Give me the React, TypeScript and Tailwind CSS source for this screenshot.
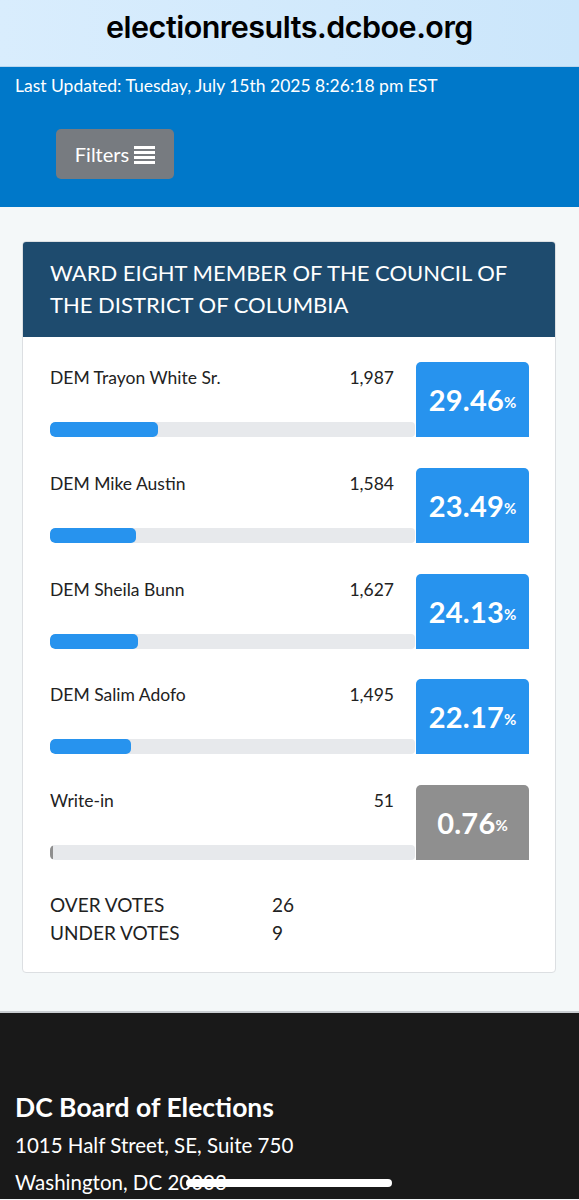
import React from "react";

const rows = [
  { name: "DEM Trayon White Sr.", votes: "1,987", pct: 29.46, color: "blue" },
  { name: "DEM Mike Austin", votes: "1,584", pct: 23.49, color: "blue" },
  { name: "DEM Sheila Bunn", votes: "1,627", pct: 24.13, color: "blue" },
  { name: "DEM Salim Adofo", votes: "1,495", pct: 22.17, color: "blue" },
  { name: "Write-in", votes: "51", pct: 0.76, color: "gray" },
];

function Row({ r }: { r: (typeof rows)[number] }) {
  const blue = r.color === "blue";
  return (
    <div className="flex h-[75px]">
      <div className="flex flex-1 flex-col justify-between pt-[4px]">
        <div className="flex justify-between pr-[21px] text-[17.5px] leading-[24px] text-[#222]">
          <span>{r.name}</span>
          <span>{r.votes}</span>
        </div>
        <div className="h-[15px] w-full overflow-hidden rounded-l-[5px] rounded-r-[4px] bg-[#e7e9ec]">
          <div
            className={blue ? "h-full rounded-[5px] bg-[#2793ee]" : "h-full rounded-[5px] bg-[#8e8e8e]"}
            style={{ width: `${Math.max(r.pct, 0.8)}%` }}
          />
        </div>
      </div>
      <div
        className={
          (blue ? "bg-[#2793ee] " : "bg-[#8f8f8f] ") +
          "ml-px flex w-[113px] items-center justify-center rounded-t-[5px] text-white"
        }
      >
        <span className="text-[29px] font-bold leading-none tracking-[0.2px]">{r.pct.toFixed(2)}</span>
        <span className="mt-[6px] text-[15px] font-bold leading-none">%</span>
      </div>
    </div>
  );
}

export default function App() {
  return (
    <div className="relative min-h-[1200px] w-[579px] bg-[#f4f8f9] font-['Lato','Noto_Sans',sans-serif]">
      <div className="flex h-[67px] items-start justify-center border-b border-[#b9d6ee] bg-gradient-to-r from-[#d9edfd] to-[#cbe6fb] pt-[7px]">
        <span className="font-['Inter','Noto_Sans',sans-serif] text-[30.5px] font-semibold leading-[40px] tracking-[-0.5px] text-black">
          electionresults.dcboe.org
        </span>
      </div>
      <div className="h-[140px] bg-[#0078c9] px-[15px] pt-[8px]">
        <div className="text-[17.5px] leading-[22px] text-white">
          Last Updated: Tuesday, July 15th 2025 8:26:18 pm EST
        </div>
        <div className="pl-[41px] pt-[32px]">
          <button className="flex h-[50px] w-[118px] items-center justify-center gap-[5px] rounded-[5px] bg-[#777b80] text-[20px] text-white">
            <span>Filters</span>
            <span className="flex flex-col gap-[2px] pt-[1px]">
              <span className="block h-[3px] w-[21px] bg-white" />
              <span className="block h-[3px] w-[21px] bg-white" />
              <span className="block h-[3px] w-[21px] bg-white" />
              <span className="block h-[3px] w-[21px] bg-white" />
            </span>
          </button>
        </div>
      </div>

      <div className="pb-[38px] pl-[22px] pr-[23px] pt-[34px]">
        <div className="overflow-hidden rounded-[4px] border border-[#dcdfe2] bg-white">
          <div className="bg-[#1e4b6e] pb-[16px] pl-[27px] pr-[20px] pt-[15px] text-[22px] leading-[32px] text-white">
            WARD EIGHT MEMBER OF THE COUNCIL OF THE DISTRICT OF COLUMBIA
          </div>
          <div className="flex flex-col gap-[30.75px] pl-[27px] pr-[26px] pt-[25px]">
            {rows.map((r) => (
              <Row key={r.name} r={r} />
            ))}
          </div>
          <div className="grid grid-cols-[222px_1fr] px-[27px] pb-[25px] pt-[31px] text-[19px] leading-[28px] text-[#222]">
            <span>OVER VOTES</span>
            <span>26</span>
            <span>UNDER VOTES</span>
            <span>9</span>
          </div>
        </div>
      </div>

      <div className="h-[188px] border-t-2 border-[#c9cdd1] bg-[#191919] px-[15px] pt-[76px] text-white">
        <div className="text-[26.5px] font-bold leading-[36px]">DC Board of Elections</div>
        <div className="pt-[2px] text-[20.5px] leading-[37px]">1015 Half Street, SE, Suite 750</div>
        <div className="text-[20.5px] leading-[37px]">Washington, DC 20003</div>
      </div>
      <div className="absolute left-[186px] top-[1179px] h-[8px] w-[206px] rounded-full bg-white" />
    </div>
  );
}
